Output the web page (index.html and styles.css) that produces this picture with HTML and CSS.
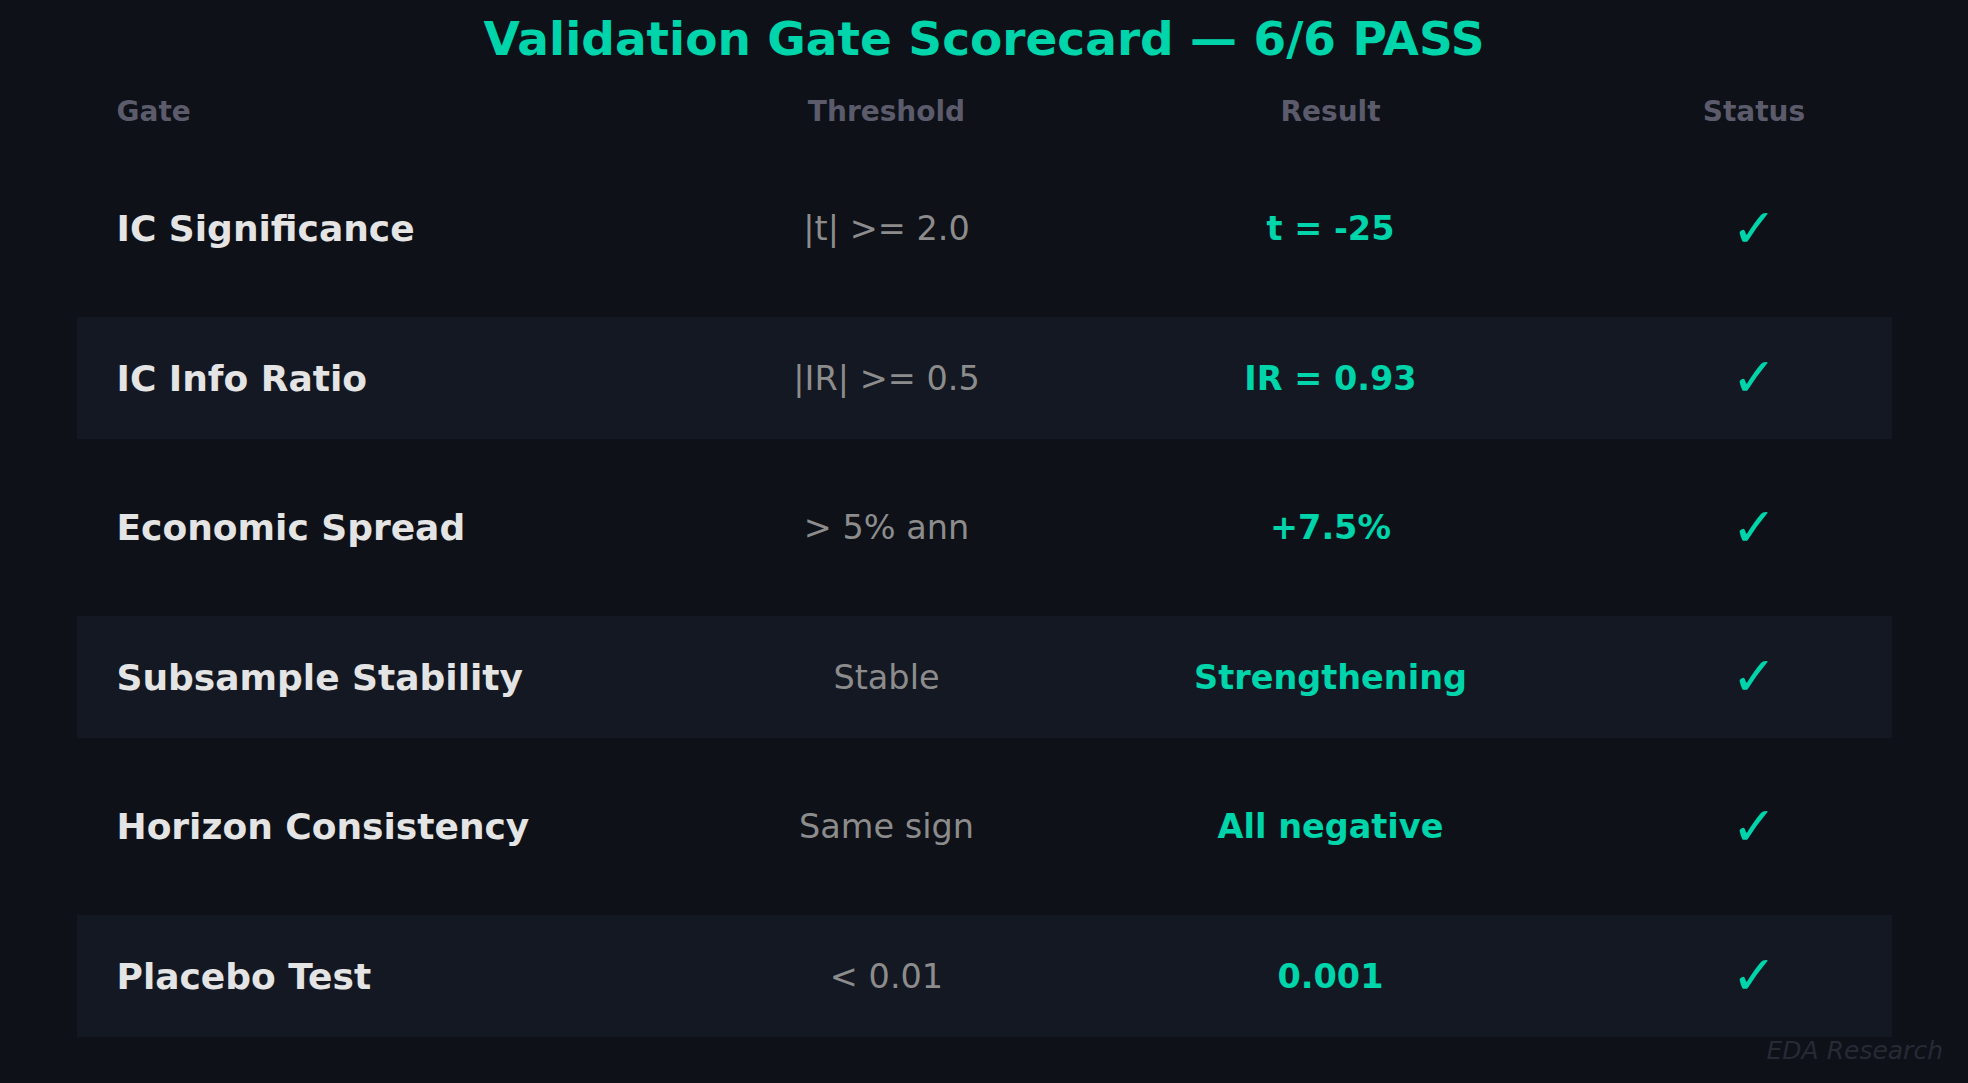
FILE: index.html
```html
<html>
    <head>
        <meta charset="utf-8" />
        <title>Validation Gate Scorecard</title>
        <link rel="stylesheet" href="styles.css">
    </head>
    <body>
        <h1 class="title">Validation Gate Scorecard — 6/6 PASS</h1>

        <div class="scorecard">
            <div class="row head">
                <span class="gate">Gate</span>
                <span>Threshold</span>
                <span>Result</span>
                <span>Status</span>
            </div>

            <div class="rows">
                <div class="row">
                    <span class="gate">IC Significance</span>
                    <span class="threshold">|t| &gt;= 2.0</span>
                    <span class="result">t = -25</span>
                    <span class="status">✓</span>
                </div>
                <div class="row band">
                    <span class="gate">IC Info Ratio</span>
                    <span class="threshold">|IR| &gt;= 0.5</span>
                    <span class="result">IR = 0.93</span>
                    <span class="status">✓</span>
                </div>
                <div class="row">
                    <span class="gate">Economic Spread</span>
                    <span class="threshold">&gt; 5% ann</span>
                    <span class="result">+7.5%</span>
                    <span class="status">✓</span>
                </div>
                <div class="row band">
                    <span class="gate">Subsample Stability</span>
                    <span class="threshold">Stable</span>
                    <span class="result">Strengthening</span>
                    <span class="status">✓</span>
                </div>
                <div class="row">
                    <span class="gate">Horizon Consistency</span>
                    <span class="threshold">Same sign</span>
                    <span class="result">All negative</span>
                    <span class="status">✓</span>
                </div>
                <div class="row band">
                    <span class="gate">Placebo Test</span>
                    <span class="threshold">&lt; 0.01</span>
                    <span class="result">0.001</span>
                    <span class="status">✓</span>
                </div>
            </div>
        </div>

        <div class="credit">EDA Research</div>
    </body>
</html>
```

FILE: styles.css
```css
html {
    background: #0e1118;
}

body,html {
    margin: 0;
    padding: 0;
    font-family: "DejaVu Sans", sans-serif;
}

.title {
    margin: 0;
    padding-top: 11px;
    font-size: 47px;
    line-height: 56px;
    font-weight: bold;
    text-align: center;
    color: #00d4aa;
}

.scorecard {
    width: 1815px;
    margin: 0 auto;
}

.row {
    display: grid;
    grid-template-columns: 652px 316px 572px 275px;
    align-items: center;
    text-align: center;
    height: 122px;
    padding-top: 1px;
    box-sizing: border-box;
}

.row .gate {
    text-align: left;
    padding-left: 40px;
}

.head {
    margin-top: 24px;
    height: 40px;
    padding-top: 0;
    font-size: 28px;
    font-weight: bold;
    color: #5b5b6c;
}

.rows {
    display: flex;
    flex-direction: column;
    gap: 27.5px;
    margin-top: 36px;
}

.band {
    background: #141822;
}

.gate {
    font-size: 36px;
    font-weight: bold;
    color: #e4e4e4;
}

.head .gate {
    font-size: 28px;
    color: #5b5b6c;
}

.threshold {
    font-size: 33.5px;
    color: #8c8c8c;
}

.result {
    font-size: 33.5px;
    font-weight: bold;
    color: #00d4aa;
}

.status {
    font-size: 54px;
    line-height: 60px;
    font-weight: bold;
    color: #00d4aa;
}

.credit {
    margin-top: 1px;
    padding-right: 25px;
    text-align: right;
    font-size: 25px;
    line-height: 25px;
    font-style: italic;
    color: #262a35;
}
```
